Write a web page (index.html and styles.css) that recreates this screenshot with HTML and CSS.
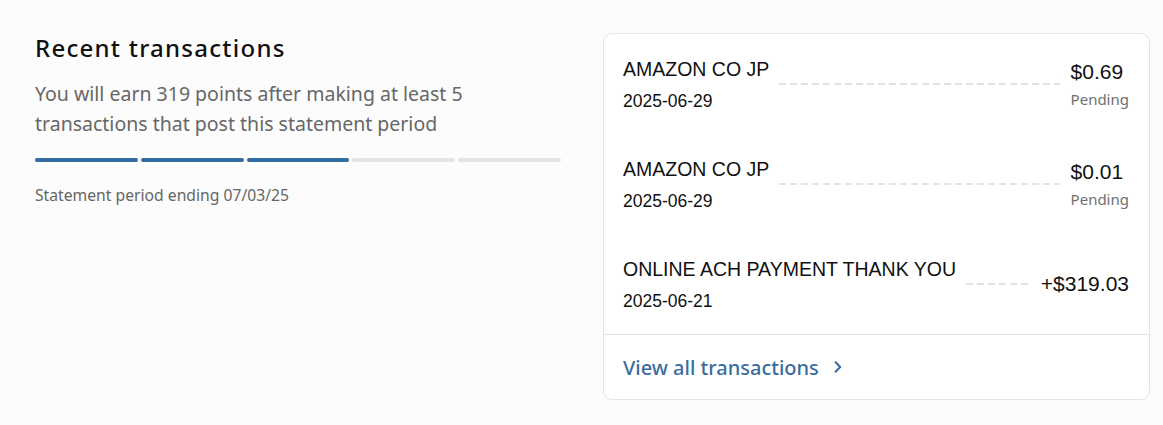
FILE: index.html
```html
<!DOCTYPE html>
<html lang="en">
<head>
<meta charset="utf-8">
<title>Recent transactions</title>
<link rel="stylesheet" href="styles.css">
</head>
<body>
<main class="page">
  <section class="summary">
    <h2 class="title">Recent transactions</h2>
    <p class="desc">You will earn 319 points after making at least 5 transactions that post this statement period</p>
    <div class="progress">
      <span class="seg done"></span>
      <span class="seg done"></span>
      <span class="seg done"></span>
      <span class="seg"></span>
      <span class="seg"></span>
    </div>
    <p class="period">Statement period ending 07/03/25</p>
  </section>
  <section class="card">
    <ul class="list">
      <li class="row">
        <div class="info">
          <div class="name">AMAZON CO JP</div>
          <div class="date">2025-06-29</div>
        </div>
        <div class="dash"></div>
        <div class="amt">
          <div class="value">$0.69</div>
          <div class="status">Pending</div>
        </div>
      </li>
      <li class="row">
        <div class="info">
          <div class="name">AMAZON CO JP</div>
          <div class="date">2025-06-29</div>
        </div>
        <div class="dash"></div>
        <div class="amt">
          <div class="value">$0.01</div>
          <div class="status">Pending</div>
        </div>
      </li>
      <li class="row">
        <div class="info">
          <div class="name">ONLINE ACH PAYMENT THANK YOU</div>
          <div class="date">2025-06-21</div>
        </div>
        <div class="dash"></div>
        <div class="amt">
          <div class="value">+$319.03</div>
        </div>
      </li>
    </ul>
    <div class="footer">
      <a class="link" href="#">View all transactions
        <svg class="chev" width="8" height="12" viewBox="0 0 8 12" aria-hidden="true"><path d="M1.6 1.2 L6.2 6 L1.6 10.8" fill="none" stroke="currentColor" stroke-width="2" stroke-linecap="round" stroke-linejoin="round"/></svg>
      </a>
    </div>
  </section>
</main>
</body>
</html>
```

FILE: styles.css
```css
* { box-sizing: border-box; }
html, body { margin: 0; padding: 0; }
body {
  background: #fcfcfc;
  font-family: "Noto Sans", "Liberation Sans", Arial, sans-serif;
  color: #141414;
}
.page {
  display: flex;
  align-items: flex-start;
  gap: 42px;
  padding: 33px 13px 0 35px;
}
.summary {
  width: 526px;
  flex: none;
}
.title {
  margin: 0;
  font-size: 24px;
  font-weight: 500;
  letter-spacing: 1.25px;
  line-height: 30px;
  color: #111;
}
.desc {
  margin: 16px 0 0;
  font-size: 19.5px;
  line-height: 30px;
  color: #676767;
}
.progress {
  display: flex;
  gap: 3px;
  margin-top: 19px;
}
.seg {
  flex: 1;
  height: 4px;
  border-radius: 2px;
  background: #e3e4e6;
}
.seg.done { background: #336b9f; }
.period {
  margin: 22px 0 0;
  font-size: 15.7px;
  line-height: 22px;
  color: #666;
}
.card {
  flex: 1;
  background: #fff;
  border: 1px solid #e3e4e7;
  border-radius: 9px;
  font-family: "Liberation Sans", Arial, sans-serif;
}
.list {
  list-style: none;
  margin: 0;
  padding: 0;
}
.row {
  display: flex;
  align-items: center;
  height: 100px;
  padding: 0 20px 0 19px;
}
.info { flex: none; }
.name {
  font-size: 19.5px;
  line-height: 24px;
  color: #111;
}
.date {
  margin-top: 10px;
  font-size: 17.5px;
  line-height: 20px;
  color: #111;
}
.dash {
  flex: 1;
  height: 2px;
  margin: 0 11px 0 10px;
  background: repeating-linear-gradient(90deg, #e2e3e5 0 7px, transparent 7px 11px);
}
.amt { flex: none; }
.value {
  font-size: 21px;
  line-height: 24px;
  color: #111;
}
.status {
  margin-top: 5px;
  font-family: "Noto Sans", "Liberation Sans", sans-serif;
  font-size: 15px;
  line-height: 20px;
  color: #707070;
}
.footer {
  border-top: 1px solid #e3e4e7;
  height: 65px;
  display: flex;
  align-items: center;
  padding: 0 20px 0 19px;
}
.link {
  display: inline-flex;
  align-items: center;
  gap: 15px;
  font-family: "Noto Sans", "Liberation Sans", sans-serif;
  font-size: 20px;
  font-weight: 500;
  color: #3a6d9e;
  text-decoration: none;
}
.chev { display: block; }
```
